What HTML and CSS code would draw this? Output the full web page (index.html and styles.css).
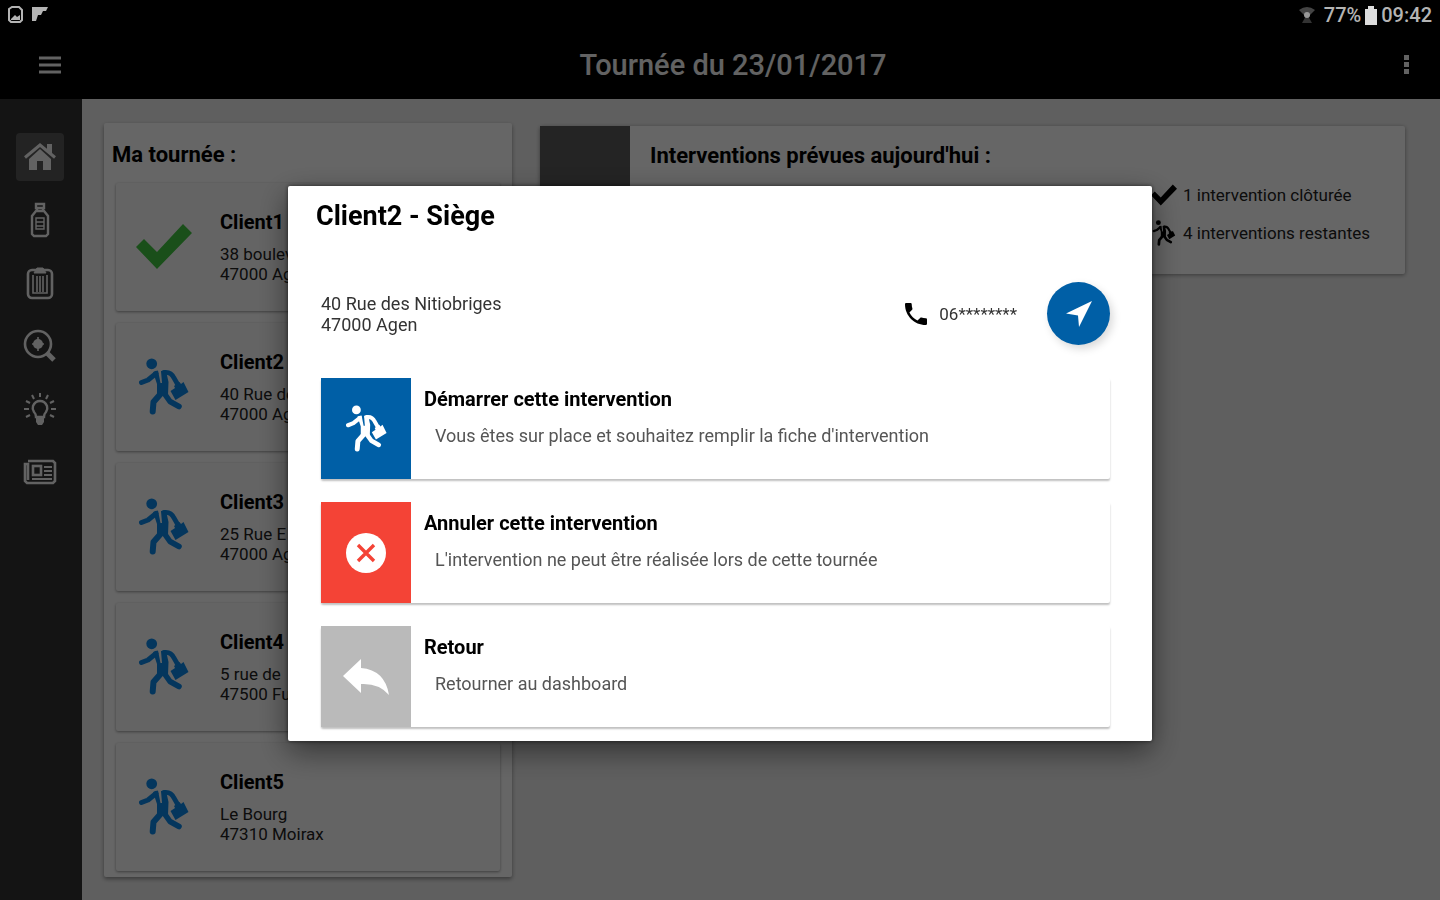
FILE: index.html
```
<!DOCTYPE html>
<html lang="fr">
<head>
    <meta charset="UTF-8">
    <meta name="viewport" content="width=device-width, initial-scale=1.0">
    <title>Tournée du 23/01/2017</title>
    <link rel="stylesheet" href="styles.css">
</head>
<body>

    <svg class="sprite" aria-hidden="true">
        <symbol id="icon-man" viewBox="0 0 50 57">
            <circle cx="12.7" cy="5.8" r="5.4"/>
            <path d="M2.5 24.5 L9 22 L17 15.5" fill="none" stroke="currentColor" stroke-width="5" stroke-linecap="round" stroke-linejoin="round"/>
            <path d="M14 14 L19 12.5 L21.5 25 L23 25 L22 13 L27 12.5 L29.5 24 L29 37 L18 38 L18 26 Z"/>
            <path d="M25 14.5 Q32 13.5 35 20 L39 27" fill="none" stroke="currentColor" stroke-width="4.8" stroke-linecap="round"/>
            <path d="M21.5 36 L14.5 44 L13.7 53.5" fill="none" stroke="currentColor" stroke-width="6" stroke-linecap="round" stroke-linejoin="round"/>
            <path d="M25 35 L31 43.5 L40 48.5" fill="none" stroke="currentColor" stroke-width="5.6" stroke-linecap="round" stroke-linejoin="round"/>
            <path d="M31.5 33 L36 30 L35 28 L40.5 24 L42 26 L44.5 24 L49.5 34 L36.5 42 Z"/>
        </symbol>
        <symbol id="icon-check" viewBox="0 0 56 45">
            <path d="M0 23 L8 15 L21 28 L47 0 L56 9 L21 45 Z"/>
        </symbol>
    </svg>

    <div class="status-bar">
        <div class="status-left">
            <svg width="16" height="18" viewBox="0 0 16 18" fill="none" stroke="currentColor" stroke-width="2"><path d="M4 1 H11 L14 4 V14 L12 16 H3 L1 14 V3 Z"/><path d="M3 13 L7 9 L9 11 L12 9 V14 H3 Z" fill="currentColor" stroke="none"/></svg>
            <svg width="16" height="18" viewBox="0 0 16 18" fill="currentColor"><path d="M0 1 H16 L14 5 H11 L9 9 H6 L4 15 H0 Z"/></svg>
        </div>
        <div class="status-right">
            <svg class="wifi" width="18" height="20" viewBox="0 0 18 20"><path d="M1 5 Q9 -1 17 5 L9 13 Z" fill="#444"/><path d="M9 9 L14 18 H4 Z" fill="#333"/><circle cx="9" cy="10" r="3" fill="#999"/></svg>
            <span>77%</span>
            <svg class="battery" width="12" height="19" viewBox="0 0 12 19" fill="#ddd"><path d="M3 0 H9 V3 H12 V19 H0 V3 H3 Z"/></svg>
            <span>09:42</span>
        </div>
    </div>

    <header class="toolbar">
        <button class="tool-btn" aria-label="Menu">
            <svg width="24" height="18" viewBox="0 0 24 18" fill="none" stroke="currentColor" stroke-width="3"><path d="M1 2 H23 M1 9 H23 M1 16 H23"/></svg>
        </button>
        <h1>Tournée du 23/01/2017</h1>
        <button class="tool-btn" aria-label="Options">
            <svg width="6" height="20" viewBox="0 0 6 20" fill="currentColor"><path d="M0 0 H5 V5 H0 Z M0 7 H5 V12 H0 Z M0 14 H5 V19 H0 Z"/></svg>
        </button>
    </header>

    <div class="page">
        <nav class="sidebar">
            <a href="#" class="active" aria-label="Accueil">
                <svg width="32" height="28" viewBox="0 0 32 28" fill="currentColor"><path d="M16 6 L27 16 V27 H19 V18 H13 V27 H5 V16 Z"/><path d="M1 14.5 L16 2 L31 14.5" fill="none" stroke="currentColor" stroke-width="3"/><path d="M23 1 H28 V11 L23 7 Z"/></svg>
            </a>
            <a href="#" aria-label="Bouteilles">
                <svg width="20" height="36" viewBox="0 0 20 36" fill="none" stroke="currentColor" stroke-width="2.4"><path d="M6 2 H14 V6 H6 Z M7 6 V9 M13 6 V9"/><path d="M6 9 H14 L18 14 V32 L16 34 H4 L2 32 V14 Z"/><path d="M6 16 H14 V27 H6 Z M6 20 H14 M6 24 H14" stroke-width="1.4"/></svg>
            </a>
            <a href="#" aria-label="Inventaire">
                <svg width="28" height="34" viewBox="0 0 28 34" fill="none" stroke="currentColor" stroke-width="2.6"><rect x="2" y="4" width="24" height="28" rx="4"/><path d="M8 7 L11 2 H17 L20 7 Z" fill="currentColor" stroke-width="1"/><path d="M7 9 V27 H21 V9 M11 10 V26 M14 10 V26 M17 10 V26" stroke-width="1.6"/></svg>
            </a>
            <a href="#" aria-label="Recherche">
                <svg width="34" height="34" viewBox="0 0 34 34" fill="none" stroke="currentColor" stroke-width="2.6"><circle cx="15" cy="15" r="13"/><path d="M24 24 L31 31" stroke-width="5"/><circle cx="15" cy="15" r="5" fill="currentColor" stroke="none"/><path d="M15 8 V22 M9 15 H21" stroke-width="1.6"/></svg>
            </a>
            <a href="#" aria-label="Conseils">
                <svg width="32" height="34" viewBox="0 0 32 34" fill="none" stroke="currentColor" stroke-width="2.4"><path d="M12 25 Q12 22 10 20 Q8 17 9 14 Q11 9 16 9 Q21 9 23 14 Q24 17 22 20 Q20 22 20 25 Z"/><path d="M12 26 H20 V30 L18 33 H14 L12 30 Z" fill="currentColor" stroke="none"/><path d="M16 1 V5 M8 3 L10 7 M24 3 L22 7 M2 9 L6 11 M30 9 L26 11 M0 17 H5 M27 17 H32 M2 25 L6 23 M30 25 L26 23" stroke-width="2"/></svg>
            </a>
            <a href="#" aria-label="Actualités">
                <svg width="34" height="26" viewBox="0 0 34 26" fill="none" stroke="currentColor" stroke-width="2.6"><path d="M5 2 H30 L32 4 V22 L30 24 H4 L2 22 V5 H5 V21"/><rect x="10" y="7" width="8" height="9"/><path d="M21 8 H29 M21 12 H29 M21 16 H29 M9 20 H29" stroke-width="1.8"/></svg>
            </a>
        </nav>

        <main class="content">
            <section class="tour">
                <h2>Ma tournée :</h2>
                <ul class="client-list">
                    <li class="client">
                        <svg class="client-check"><use href="#icon-check"/></svg>
                        <div><h3>Client1</h3><p>38 boulevard<br>47000 Agen</p></div>
                    </li>
                    <li class="client">
                        <svg class="client-man"><use href="#icon-man"/></svg>
                        <div><h3>Client2</h3><p>40 Rue des<br>47000 Agen</p></div>
                    </li>
                    <li class="client">
                        <svg class="client-man"><use href="#icon-man"/></svg>
                        <div><h3>Client3</h3><p>25 Rue E<br>47000 Agen</p></div>
                    </li>
                    <li class="client">
                        <svg class="client-man"><use href="#icon-man"/></svg>
                        <div><h3>Client4</h3><p>5 rue de<br>47500 Fu</p></div>
                    </li>
                    <li class="client">
                        <svg class="client-man"><use href="#icon-man"/></svg>
                        <div><h3>Client5</h3><p>Le Bourg<br>47310 Moirax</p></div>
                    </li>
                </ul>
            </section>

            <section class="summary">
                <div class="summary-tile"></div>
                <div class="summary-body">
                    <h2>Interventions prévues aujourd'hui :</h2>
                    <ul class="counts">
                        <li><svg class="count-icon"><use href="#icon-check"/></svg>1 intervention clôturée</li>
                        <li><svg class="count-icon"><use href="#icon-man"/></svg>4 interventions restantes</li>
                    </ul>
                </div>
            </section>
        </main>
    </div>

    <div class="overlay">
        <div class="modal" role="dialog" aria-labelledby="modal-title">
            <h2 id="modal-title">Client2 - Siège</h2>
            <div class="contact">
                <address>40 Rue des Nitiobriges<br>47000 Agen</address>
                <a class="phone" href="#">
                    <svg width="22" height="22" viewBox="3 3 18 18" fill="currentColor"><path d="M6.62 10.79c1.44 2.83 3.76 5.14 6.59 6.59l2.2-2.2c.27-.27.67-.36 1.02-.24 1.12.37 2.33.57 3.57.57.55 0 1 .45 1 1V20c0 .55-.45 1-1 1-9.39 0-17-7.61-17-17 0-.55.45-1 1-1h3.5c.55 0 1 .45 1 1 0 1.25.2 2.45.57 3.57.11.35.03.74-.25 1.02l-2.2 2.2z"/></svg>
                    <span>06********</span>
                </a>
                <button class="locate" aria-label="Itinéraire">
                    <svg width="28" height="28" viewBox="0 0 28 28" fill="#fff"><path d="M27 1 L14 27 L13 15.5 L1 13.5 Z"/></svg>
                </button>
            </div>

            <button class="action">
                <span class="action-tile start"><svg class="action-man"><use href="#icon-man"/></svg></span>
                <span class="action-text"><strong>Démarrer cette intervention</strong><span>Vous êtes sur place et souhaitez remplir la fiche d'intervention</span></span>
            </button>
            <button class="action">
                <span class="action-tile cancel">
                    <svg width="40" height="40" viewBox="0 0 40 40"><circle cx="20" cy="20" r="20" fill="#fff"/><path d="M12 12 L28 28 M28 12 L12 28" stroke="#f44336" stroke-width="3.4"/></svg>
                </span>
                <span class="action-text"><strong>Annuler cette intervention</strong><span>L'intervention ne peut être réalisée lors de cette tournée</span></span>
            </button>
            <button class="action">
                <span class="action-tile back">
                    <svg width="46" height="36" viewBox="0 0 46 36" fill="#fff"><path d="M0 17 L18 0 V9 Q42 11 46 36 Q36 24 18 25 V34 Z"/></svg>
                </span>
                <span class="action-text"><strong>Retour</strong><span>Retourner au dashboard</span></span>
            </button>
        </div>
    </div>

</body>
</html>
```
FILE: styles.css
```
* {
    box-sizing: border-box;
}

body {
    margin: 0;
    min-height: 100vh;
    display: flex;
    flex-direction: column;
    background: #eee;
    color: #000;
    font-family: Roboto, "Liberation Sans", sans-serif;
    font-size: 17px;
}

h1, h2, h3, p, ul {
    margin: 0;
    padding: 0;
}

ul {
    list-style: none;
}

button {
    border: none;
    padding: 0;
    font-family: inherit;
    font-size: inherit;
    cursor: pointer;
}

.sprite {
    display: none;
}

/* Status bar stays above the dimmed page */
.status-bar {
    position: relative;
    z-index: 2;
    display: flex;
    justify-content: space-between;
    align-items: center;
    height: 30px;
    padding: 0 8px;
    background: #000;
    color: #b4b4b4;
    font-size: 20px;
    font-weight: 500;
}

.status-left, .status-right {
    display: flex;
    align-items: center;
}

.status-left {
    gap: 8px;
}

.status-right {
    gap: 4px;
}

.wifi {
    margin-right: 4px;
}

.toolbar {
    display: flex;
    align-items: center;
    justify-content: space-between;
    height: 69px;
    padding: 0 30px 0 38px;
    background: #000;
    color: #f4f4f4;
}

.toolbar h1 {
    font-size: 29px;
    font-weight: 500;
}

.tool-btn {
    display: flex;
    background: none;
    color: #f4f4f4;
}

.page {
    flex: 1;
    display: flex;
}

.sidebar {
    display: flex;
    flex-direction: column;
    gap: 15px;
    width: 82px;
    padding: 34px 0 0 16px;
    background: #343434;
}

.sidebar a {
    display: flex;
    align-items: center;
    justify-content: center;
    width: 48px;
    height: 48px;
    border-radius: 4px;
    color: #f4f4f4;
}

.sidebar .active {
    background: #585858;
}

.content {
    flex: 1;
    display: flex;
    align-items: flex-start;
    gap: 28px;
    padding: 24px 35px 22px 22px;
}

.content h2 {
    font-size: 22px;
    font-weight: 700;
    line-height: 24px;
}

.tour {
    width: 408px;
    padding: 20px 12px 6px;
    background: #fff;
    border-radius: 2px;
    box-shadow: 0 2px 4px rgba(0, 0, 0, 0.4);
}

.tour h2 {
    margin-left: -4px;
}

.client-list {
    display: flex;
    flex-direction: column;
    gap: 12px;
    margin-top: 16px;
}

.client {
    display: flex;
    align-items: flex-start;
    gap: 28px;
    height: 128px;
    padding: 27px 20px 0 20px;
    background: #fafafa;
    border-radius: 2px;
    box-shadow: 0 1px 3px rgba(0, 0, 0, 0.4);
}

.client h3 {
    font-size: 20px;
    font-weight: 700;
    line-height: 24px;
}

.client p {
    margin-top: 10px;
    font-size: 17px;
    line-height: 20px;
    color: #222;
}

.client-man, .client-check {
    width: 56px;
    height: 57px;
    margin-top: 8px;
    fill: currentColor;
    color: #0c88e8;
}

.client-check {
    height: 45px;
    margin-top: 14px;
    color: #43c643;
}

.summary {
    flex: 1;
    display: flex;
    margin-top: 3px;
    min-height: 148px;
    background: #fff;
    border-radius: 2px;
    box-shadow: 0 1px 4px rgba(0, 0, 0, 0.4);
}

.summary-tile {
    width: 90px;
    background: #5a5a5a;
}

.summary-body {
    flex: 1;
    padding: 18px 28px 0 20px;
}

.counts {
    display: flex;
    flex-direction: column;
    gap: 14px;
    width: 226px;
    margin: 15px 0 0 auto;
}

.counts li {
    display: flex;
    align-items: center;
    gap: 6px;
    height: 24px;
    font-size: 17px;
    white-space: nowrap;
    color: #222;
}

.count-icon {
    width: 26px;
    height: 26px;
    color: #000;
    fill: currentColor;
}

.overlay {
    position: fixed;
    inset: 0;
    z-index: 1;
    display: flex;
    align-items: center;
    justify-content: center;
    padding-top: 27px;
    background: rgba(0, 0, 0, 0.6);
}

.modal {
    width: 60%;
    padding: 14px 42px 14px 33px;
    background: #fff;
    border-radius: 2px;
    box-shadow: 0 10px 30px rgba(0, 0, 0, 0.5), 0 0 4px rgba(0, 0, 0, 0.6);
}

.modal h2 {
    margin-left: -5px;
    font-size: 27px;
    font-weight: 700;
    line-height: 32px;
}

.contact {
    display: flex;
    align-items: center;
    margin: 50px 0 33px;
    color: #333;
}

address {
    flex: 1;
    font-size: 18px;
    font-style: normal;
    line-height: 21px;
}

.phone {
    display: flex;
    align-items: center;
    gap: 12px;
    color: #333;
    text-decoration: none;
}

.phone svg {
    color: #000;
}

.locate {
    display: flex;
    align-items: center;
    justify-content: center;
    width: 63px;
    height: 63px;
    margin-left: 30px;
    border-radius: 50%;
    background: #005fa6;
    box-shadow: 3px 4px 8px rgba(0, 0, 0, 0.15);
}

.action {
    display: flex;
    width: 100%;
    min-height: 101px;
    background: #fff;
    border-radius: 2px;
    box-shadow: 0 2px 2px rgba(0, 0, 0, 0.25);
    color: #000;
    text-align: left;
}

.action + .action {
    margin-top: 23px;
}

.action-tile {
    display: flex;
    align-items: center;
    justify-content: center;
    align-self: stretch;
    width: 90px;
}

.start {
    background: #005fa6;
}

.cancel {
    background: #f44336;
}

.back {
    background: #bababa;
}

.action-man {
    width: 41px;
    height: 47px;
    fill: currentColor;
    color: #fff;
}

.action-text {
    flex: 1;
    padding: 9px 13px;
}

.action-text strong {
    display: block;
    font-size: 20px;
    font-weight: 700;
    line-height: 24px;
}

.action-text span {
    display: block;
    margin: 13px 0 0 11px;
    font-size: 18px;
    line-height: 24px;
    color: #555;
}
```
